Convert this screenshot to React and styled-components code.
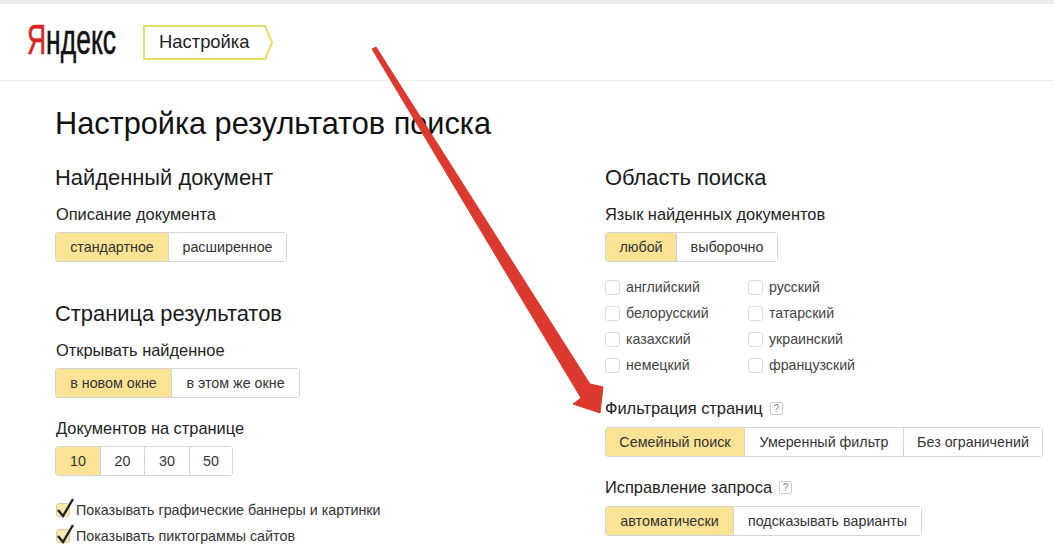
import styled, { createGlobalStyle } from 'styled-components';

const Global = createGlobalStyle`
  html, body {
    margin: 0;
    padding: 0;
    background: #fff;
    overflow: hidden;
  }
  body {
    font-family: "Liberation Sans", Arial, sans-serif;
    color: #1a1a1a;
  }
`;

const Page = styled.div`
  position: relative;
  width: 1054px;
  height: 554px;
  overflow: hidden;
  background: #fff;
`;

const Header = styled.header`
  height: 76px;
  margin-top: 4px;
  border-bottom: 1px solid #eeeeee;
  display: flex;
  align-items: center;
  padding-left: 27px;
  box-shadow: 0 -4px 0 #ececec;
`;

const Logo = styled.div`
  width: 116px;
  font-size: 42px;
  line-height: 40px;
  color: #111;
  white-space: nowrap;
  -webkit-text-stroke: 0.6px #111;
  transform: translateY(-2px) scaleX(0.63);
  transform-origin: left center;
  span {
    color: #d8231f;
    -webkit-text-stroke: 0.6px #d8231f;
  }
`;

const Crumb = styled.div`
  position: relative;
  width: 130px;
  height: 35px;
  display: flex;
  align-items: center;
  padding-left: 16px;
  box-sizing: border-box;
  font-size: 18.4px;
  color: #222;
  svg {
    position: absolute;
    left: 0;
    top: 0;
  }
  span {
    position: relative;
  }
`;

const Content = styled.main`
  padding: 25px 0 0 56px;
  display: grid;
  grid-template-columns: 549px 1fr;
  grid-template-rows: auto auto;
`;

const Title = styled.h1`
  grid-column: 1 / 3;
  margin: 0 0 23px -1px;
  font-size: 30.7px;
  line-height: 36px;
  font-weight: 400;
  color: #111;
`;

const Column = styled.section`
  display: flex;
  flex-direction: column;
  align-items: flex-start;
`;

const Heading = styled.h2`
  margin: 0 0 13px ${(p) => (p.$pull ? -1 : 0)}px;
  font-size: 21.9px;
  line-height: 26px;
  font-weight: 400;
  color: #1a1a1a;
`;

const Label = styled.div`
  display: flex;
  align-items: center;
  gap: 7px;
  font-size: 16.4px;
  line-height: 20px;
  margin-bottom: ${(p) => p.$after || 9}px;
  color: #222;
`;

const Help = styled.span`
  width: 13px;
  height: 13px;
  box-sizing: border-box;
  border: 1px solid #ccc;
  border-radius: 2px;
  font-size: 10px;
  line-height: 11px;
  text-align: center;
  color: #888;
`;

const Group = styled.div`
  display: flex;
  height: 28px;
  margin-left: ${(p) => (p.$shift ? 1 : 0)}px;
  margin-bottom: ${(p) => p.$after || 0}px;
  border-radius: 3px;
  box-shadow: 0 0 0 1px #d4d4d4;
`;

const Option = styled.div`
  display: flex;
  align-items: center;
  justify-content: center;
  width: ${(p) => p.$w}px;
  font-size: 14.3px;
  color: #333;
  background: ${(p) => (p.$active ? '#fae394' : '#fff')};
  border-right: ${(p) => (p.$last ? '0' : '1px solid #d4d4d4')};
  box-sizing: border-box;
`;

const Langs = styled.div`
  display: grid;
  grid-template-columns: 143px 143px;
  grid-auto-rows: 26px;
  margin: 13px 0 20px;
`;

const Lang = styled.div`
  display: flex;
  align-items: center;
  gap: 6px;
  font-size: 14.2px;
  color: #444;
`;

const Box = styled.span`
  position: relative;
  display: block;
  width: ${(p) => (p.$checked ? 14 : 15)}px;
  height: ${(p) => (p.$checked ? 14 : 15)}px;
  box-sizing: border-box;
  border: 1px solid ${(p) => (p.$checked ? '#d8cf9f' : '#dddddd')};
  border-radius: 3px;
  background: ${(p) => (p.$checked ? '#f8e9b0' : '#fff')};
  svg {
    position: absolute;
    left: 0;
    top: -7px;
  }
`;

const Check = styled.div`
  display: flex;
  align-items: center;
  gap: 6px;
  height: 26px;
  font-size: 14.3px;
  color: #333;
`;

const Arrow = styled.svg`
  position: absolute;
  left: 0;
  top: 0;
  pointer-events: none;
`;

const languages = ['английский', 'русский', 'белорусский', 'татарский', 'казахский', 'украинский', 'немецкий', 'французский'];

const CheckRow = ({ children }) => (
  <Check>
    <Box $checked>
      <svg width="18" height="21" viewBox="0 0 18 21">
        <path d="M1 13l5 6L16 2" fill="none" stroke="#222" strokeWidth="2.4" />
      </svg>
    </Box>
    {children}
  </Check>
);

export default function App() {
  return (
    <Page>
      <Global />
      <Header>
        <Logo><span>Я</span>ндекс</Logo>
        <Crumb>
          <svg width="130" height="35" viewBox="0 0 130 35">
            <path d="M1 1H122L129 17.5L122 34H1Z" fill="#fff" stroke="#e9dd63" strokeWidth="2" />
          </svg>
          <span>Настройка</span>
        </Crumb>
      </Header>
      <Content>
        <Title>Настройка результатов поиска</Title>
        <Column>
          <Heading $pull>Найденный документ</Heading>
          <Label>Описание документа</Label>
          <Group $after={40}>
            <Option $active $w={113}>стандартное</Option>
            <Option $last $w={117}>расширенное</Option>
          </Group>
          <Heading $pull>Страница результатов</Heading>
          <Label>Открывать найденное</Label>
          <Group $after={21}>
            <Option $active $w={116}>в новом окне</Option>
            <Option $last $w={127}>в этом же окне</Option>
          </Group>
          <Label>Документов на странице</Label>
          <Group $after={22}>
            <Option $active $w={45}>10</Option>
            <Option $w={44}>20</Option>
            <Option $w={45}>30</Option>
            <Option $last $w={42}>50</Option>
          </Group>
          <CheckRow>Показывать графические баннеры и картинки</CheckRow>
          <CheckRow>Показывать пиктограммы сайтов</CheckRow>
        </Column>
        <Column>
          <Heading>Область поиска</Heading>
          <Label>Язык найденных документов</Label>
          <Group $shift>
            <Option $active $w={71}>любой</Option>
            <Option $last $w={100}>выборочно</Option>
          </Group>
          <Langs>
            {languages.map((lang) => (
              <Lang key={lang}><Box />{lang}</Lang>
            ))}
          </Langs>
          <Label $after={10}>Фильтрация страниц <Help>?</Help></Label>
          <Group $shift $after={21}>
            <Option $active $w={139}>Семейный поиск</Option>
            <Option $w={159}>Умеренный фильтр</Option>
            <Option $last $w={138}>Без ограничений</Option>
          </Group>
          <Label $after={10}>Исправление запроса <Help>?</Help></Label>
          <Group $shift>
            <Option $active $w={128}>автоматически</Option>
            <Option $last $w={187}>подсказывать варианты</Option>
          </Group>
        </Column>
      </Content>
      <Arrow width="1054" height="554" viewBox="0 0 1054 554">
        <path d="M372 49L376 47L590 384L603 387L600 413L573 404L581 398Z" fill="#dc3a2e" stroke="#dc3a2e" strokeWidth="1" strokeLinejoin="round" />
      </Arrow>
    </Page>
  );
}
